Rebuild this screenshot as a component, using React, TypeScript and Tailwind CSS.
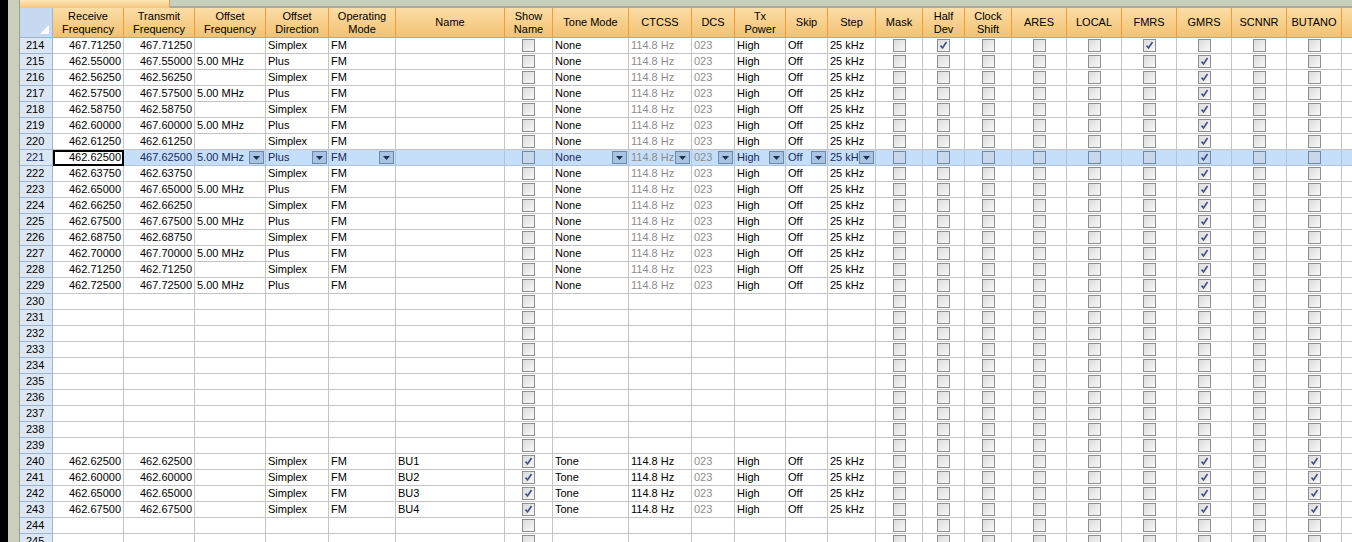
import React from "react";

const cols: { k: string; w: number; t: string; a?: "r" | "c" | "l"; cb?: boolean }[] = [
  { k: "rx", w: 71, t: "Receive\nFrequency", a: "r" },
  { k: "tx", w: 71, t: "Transmit\nFrequency", a: "r" },
  { k: "of", w: 71, t: "Offset\nFrequency" },
  { k: "od", w: 63, t: "Offset\nDirection" },
  { k: "om", w: 67, t: "Operating\nMode" },
  { k: "nm", w: 109, t: "Name" },
  { k: "sn", w: 48, t: "Show\nName", cb: true },
  { k: "tm", w: 76, t: "Tone Mode" },
  { k: "ct", w: 63, t: "CTCSS" },
  { k: "dc", w: 43, t: "DCS" },
  { k: "pw", w: 51, t: "Tx\nPower" },
  { k: "sk", w: 42, t: "Skip" },
  { k: "st", w: 48, t: "Step" },
  { k: "mk", w: 47, t: "Mask", cb: true },
  { k: "hd", w: 42, t: "Half\nDev", cb: true },
  { k: "cs", w: 47, t: "Clock\nShift", cb: true },
  { k: "ar", w: 55, t: "ARES", cb: true },
  { k: "lo", w: 55, t: "LOCAL", cb: true },
  { k: "fm", w: 55, t: "FMRS", cb: true },
  { k: "gm", w: 55, t: "GMRS", cb: true },
  { k: "sc", w: 55, t: "SCNNR", cb: true },
  { k: "bu", w: 55, t: "BUTANO", cb: true },
];

type Row = Record<string, any>;
const rows: Row[] = [];
const freqs = ["462.55000","462.56250","462.57500","462.58750","462.60000","462.61250","462.62500","462.63750","462.65000","462.66250","462.67500","462.68750","462.70000","462.71250","462.72500"];
rows.push({ n: 214, rx: "467.71250", tx: "467.71250", od: "Simplex", om: "FM", tm: "None", ct: "114.8 Hz", dc: "023", pw: "High", sk: "Off", st: "25 kHz", hd: true, fm: true });
freqs.forEach((f, i) => {
  const plus = i % 2 === 0;
  rows.push({ n: 215 + i, rx: f, tx: plus ? "467" + f.slice(3) : f, of: plus ? "5.00 MHz" : "", od: plus ? "Plus" : "Simplex", om: "FM", tm: "None", ct: "114.8 Hz", dc: "023", pw: "High", sk: "Off", st: "25 kHz", gm: true, sel: 215 + i === 221 });
});
for (let n = 230; n <= 239; n++) rows.push({ n, empty: true });
[["BU1","462.62500"],["BU2","462.60000"],["BU3","462.65000"],["BU4","462.67500"]].forEach(([nm, f], i) =>
  rows.push({ n: 240 + i, rx: f, tx: f, od: "Simplex", om: "FM", nm, sn: true, tm: "Tone", ct: "114.8 Hz", ctb: true, dc: "023", pw: "High", sk: "Off", st: "25 kHz", gm: true, bu: true })
);
rows.push({ n: 244, empty: true });
rows.push({ n: 245, empty: true });

const Check = ({ on, sel }: { on?: boolean; sel?: boolean }) => (
  <div className={`w-[13px] h-[13px] border ${sel ? "border-[#6d89a8] bg-[#c8d8ea]" : "border-[#8f8f8f] bg-gradient-to-br from-[#dcdcdc] to-[#f8f8f8]"} flex items-center justify-center`}>
    {on && (
      <svg width="9" height="9" viewBox="0 0 9 9"><path d="M1.5 4.5 L3.5 7 L7.5 1" fill="none" stroke="#3b4f8f" strokeWidth="1.6" /></svg>
    )}
  </div>
);

const Drop = () => (
  <div className="absolute right-[1px] top-[1px] w-[15px] h-[13px] bg-[#a9c4e3] border border-[#6d89a8] flex items-center justify-center">
    <svg width="7" height="4" viewBox="0 0 7 4"><path d="M0 0 H7 L3.5 4 Z" fill="#1f2f4f" /></svg>
  </div>
);

export default function App() {
  return (
    <div className="w-[1352px] h-[542px] overflow-hidden bg-white flex text-[11px] text-black" style={{ fontFamily: '"Liberation Sans", Arial, sans-serif' }}>
      <div className="w-[8px] bg-black shrink-0" />
      <div className="w-[12px] shrink-0 bg-[#c9cfbc] border-r border-[#9aa48c]" />
      <div className="flex flex-col flex-1 min-w-0">
        <div className="h-[8px] shrink-0 bg-[#c9cfbc] flex">
          <div className="w-[150px] h-[8px] bg-gradient-to-b from-[#fde7b8] to-[#f6c77e] border-r border-[#e0a050]" />
          <div className="flex-1 border-b-2 border-[#a8a8a0]" />
        </div>
        <div className="flex h-[30px] shrink-0">
          <div className="w-[33px] shrink-0 bg-[#c6d9f1] border-r border-b border-[#9eb6ce] relative">
            <div className="absolute right-[3px] bottom-[3px] w-0 h-0 border-l-[9px] border-l-transparent border-b-[9px] border-b-white" />
          </div>
          {cols.map((c) => (
            <div key={c.k} style={{ width: c.w }} className="shrink-0 bg-gradient-to-b from-[#fbdda6] to-[#f3c271] border-r border-b border-[#f29b3b] flex items-center justify-center text-center leading-[13px] whitespace-pre">
              {c.t}
            </div>
          ))}
          <div className="flex-1 bg-gradient-to-b from-[#fbdda6] to-[#f3c271] border-b border-[#f29b3b]" />
        </div>
        {rows.map((r) => (
          <div key={r.n} className={`flex h-[16px] shrink-0 ${r.sel ? "bg-[#c5dffa] text-[#1a2a5a]" : ""}`}>
            <div className="w-[33px] shrink-0 bg-[#dde7f4] border-r border-b border-[#9eb6ce] pl-[6px] leading-[15px]">{r.n}</div>
            {cols.map((c) => {
              const v = r[c.k];
              const grey = (c.k === "ct" && !r.ctb) || c.k === "dc";
              const hasDrop = r.sel && ["of", "od", "om", "tm", "ct", "dc", "pw", "sk", "st"].includes(c.k);
              const cur = r.sel && c.k === "rx";
              return (
                <div key={c.k} style={{ width: c.w }} className={`shrink-0 relative border-r border-b ${r.sel ? "border-[#b0c4da]" : "border-[#c4c4c4]"} flex items-center overflow-hidden whitespace-nowrap ${c.cb ? "justify-center" : c.a === "r" ? "justify-end pr-[2px]" : "pl-[2px]"} ${grey ? "text-[#8c8c8c]" : ""} ${cur ? "bg-white outline-2 outline-black -outline-offset-2 text-black" : ""}`}>
                  {c.cb ? <Check on={!!v} sel={r.sel} /> : r.empty ? null : v}
                  {hasDrop && <Drop />}
                </div>
              );
            })}
            <div className={`flex-1 border-b ${r.sel ? "border-[#b0c4da]" : "border-[#c4c4c4]"}`} />
          </div>
        ))}
      </div>
    </div>
  );
}
